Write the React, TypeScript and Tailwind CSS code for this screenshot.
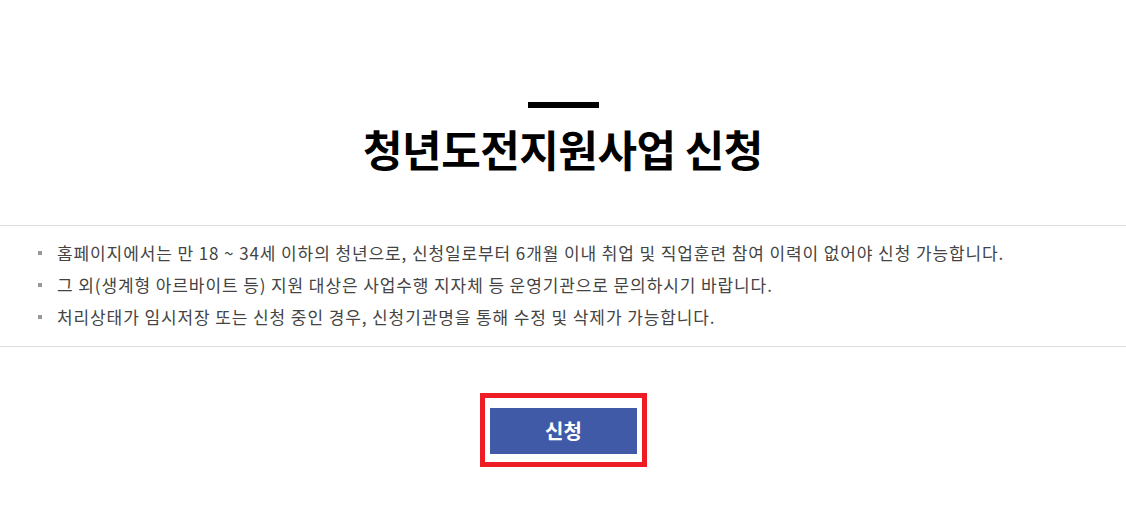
import * as React from 'react'

const notes = [
  '홈페이지에서는 만 18 ~ 34세 이하의 청년으로, 신청일로부터 6개월 이내 취업 및 직업훈련 참여 이력이 없어야 신청 가능합니다.',
  '그 외(생계형 아르바이트 등) 지원 대상은 사업수행 지자체 등 운영기관으로 문의하시기 바랍니다.',
  '처리상태가 임시저장 또는 신청 중인 경우, 신청기관명을 통해 수정 및 삭제가 가능합니다.',
]

export default function App() {
  return (
    <div className="w-[1126px] h-[520px] bg-white font-['Noto_Sans_CJK_KR','Noto_Sans',sans-serif] overflow-hidden">
      <header className="flex flex-col items-center pt-[102px]">
        <span className="block w-[71px] h-[6px] bg-black" />
        <h1 className="mt-[11px] text-[43px] leading-[58px] font-bold text-black tracking-[-0.5px]">
          청년도전지원사업 신청
        </h1>
      </header>

      <ul className="mt-[48px] border-t border-b border-[#dddddd] pt-[11px] pb-[13px] pl-[38px]">
        {notes.map((n) => (
          <li key={n} className="flex items-center h-[32px] text-[17px] tracking-[0.9px] text-[#444444]">
            <span className="w-[4px] h-[4px] bg-[#999999] mr-[15px] shrink-0" />
            {n}
          </li>
        ))}
      </ul>

      <div className="flex justify-center mt-[46px]">
        <div className="ml-[1px] border-[5px] border-[#ee1c25] pt-[10px] pb-[8px] px-[5px]">
          <button className="w-[147px] h-[46px] bg-[#415aa8] text-white text-[20px] font-bold">
            신청
          </button>
        </div>
      </div>
    </div>
  )
}
